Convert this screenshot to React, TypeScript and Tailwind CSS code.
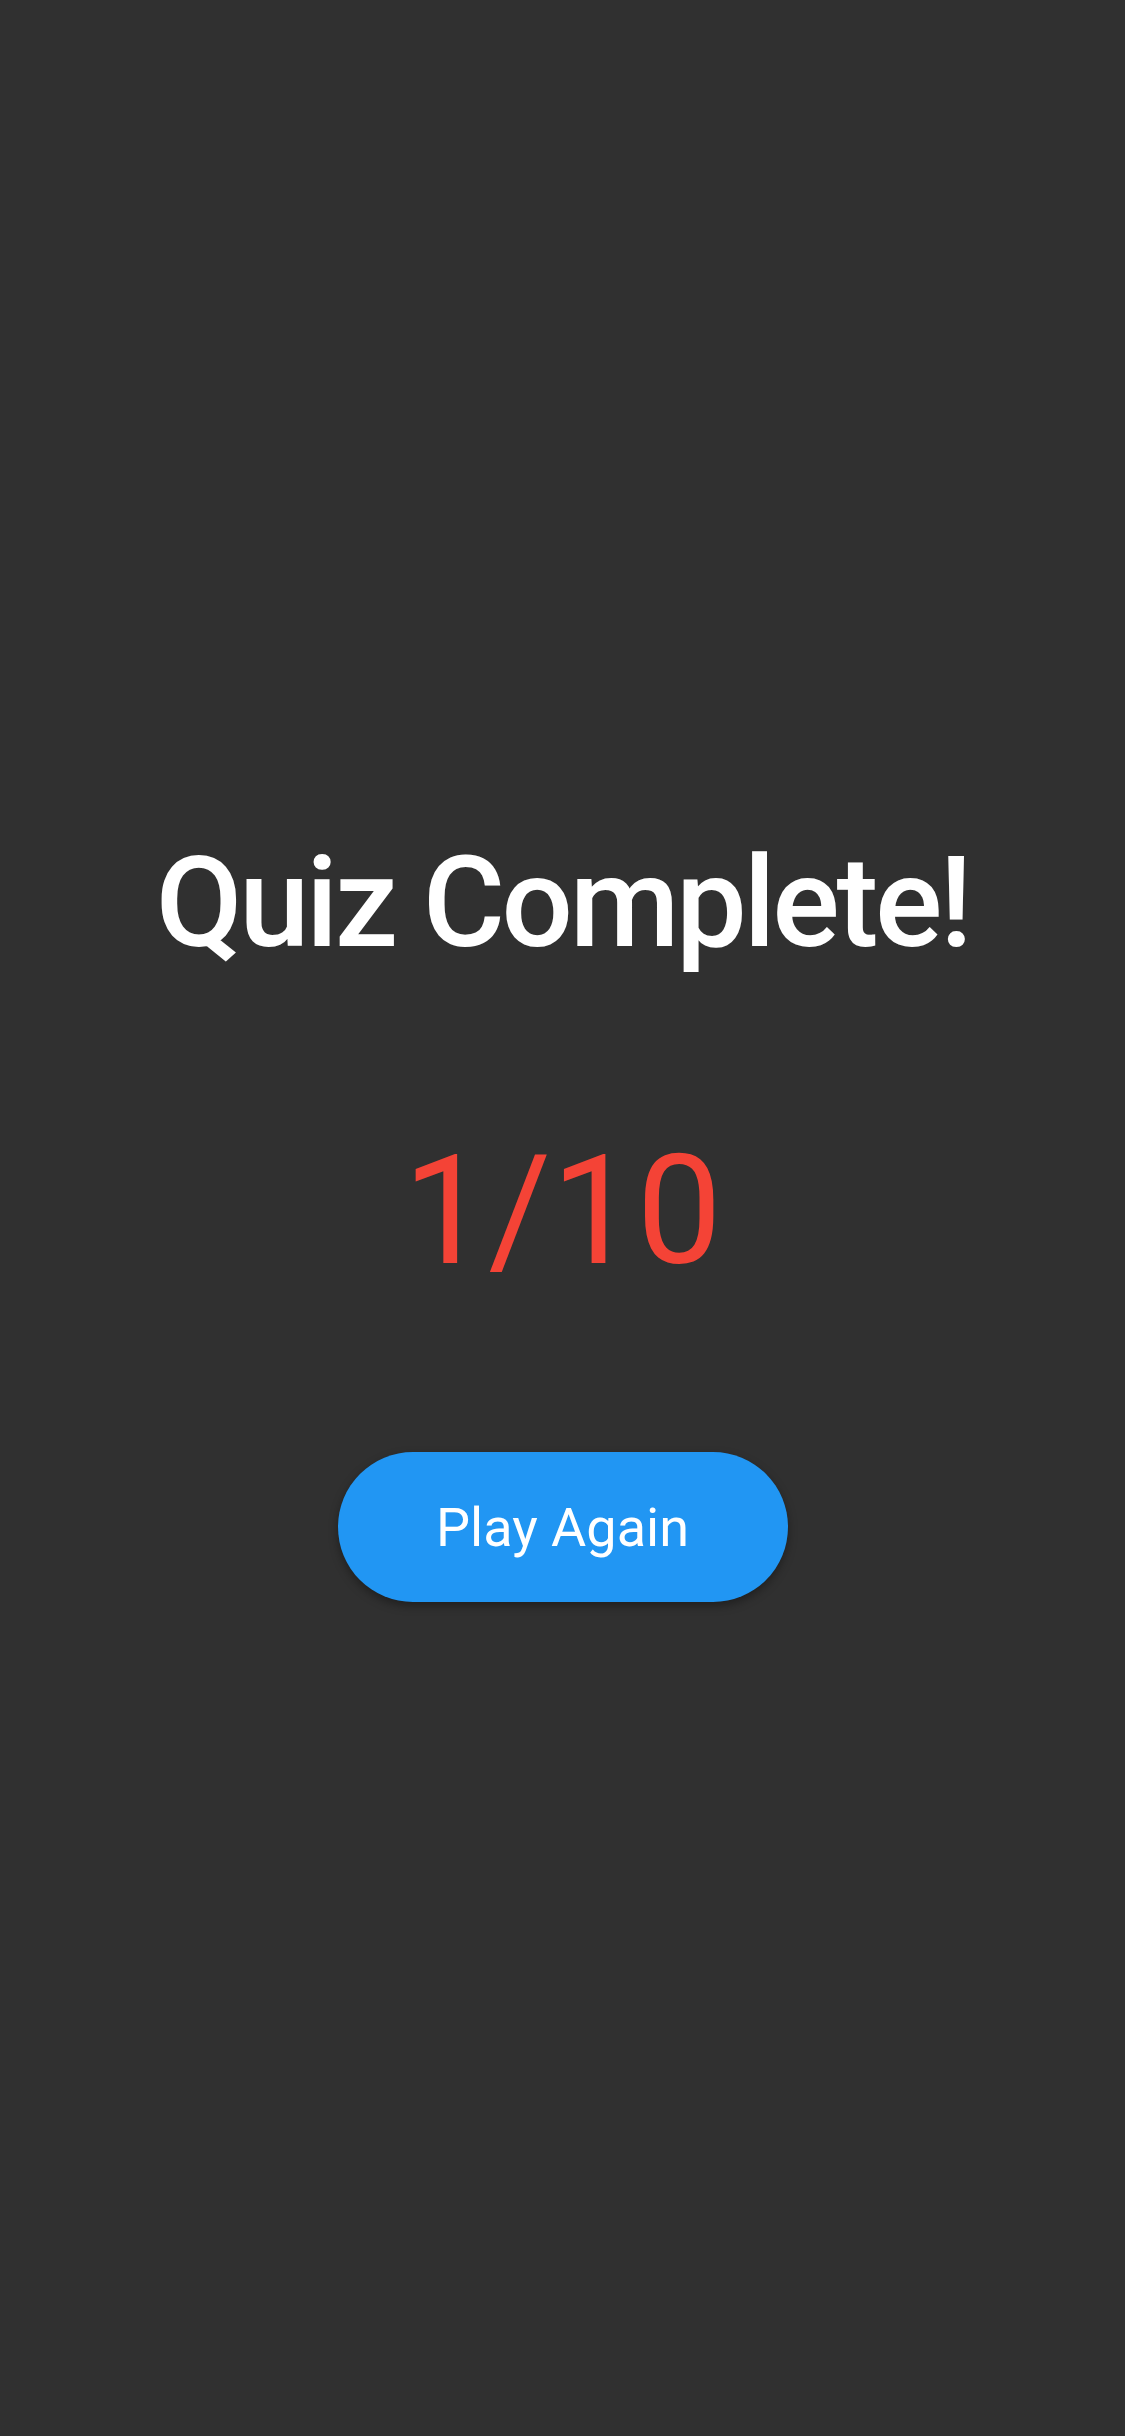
import React from "react";

export default function App() {
  return (
    <div
      className="min-h-[2436px] w-full bg-[#303030] flex flex-col items-center justify-center pt-[6px]"
      style={{ fontFamily: "Roboto, 'Noto Sans', sans-serif" }}
    >
      <h1 className="text-[126px] leading-none font-medium tracking-[-3.35px] text-white">Quiz Complete!</h1>
      <div className="mt-[169px] text-[152px] leading-none font-normal text-[#f44336]">1/10</div>
      <button className="mt-[165px] w-[450px] h-[150px] rounded-full bg-[#2196f3] text-white text-[54px] font-normal shadow-[0_4px_10px_rgba(0,0,0,0.35)] flex items-center justify-center">
        Play Again
      </button>
    </div>
  );
}
